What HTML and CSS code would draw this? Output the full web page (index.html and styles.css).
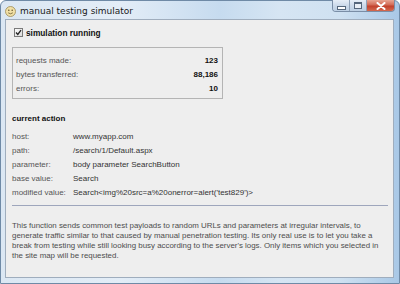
FILE: index.html
```html
<!DOCTYPE html>
<html>
<head>
<meta charset="utf-8">
<link rel="stylesheet" href="styles.css">
</head>
<body>
<div class="window">
  <div class="titlebar">
    <svg class="appicon" width="11" height="11" viewBox="0 0 11 11">
      <circle cx="5.5" cy="5.5" r="5" fill="#f1e0a6" stroke="#9c8a55" stroke-width="0.8"/>
      <circle cx="3.8" cy="4.3" r="0.8" fill="#6a5a30"/>
      <circle cx="7.2" cy="4.3" r="0.8" fill="#6a5a30"/>
      <path d="M3.2 6.8 Q5.5 8.8 7.8 6.8" fill="none" stroke="#6a5a30" stroke-width="0.8"/>
    </svg>
    <span class="title">manual testing simulator</span>
    <div class="caption">
      <div class="cbtn min"><span class="minbar"></span></div>
      <div class="cbtn max"><span class="maxbox"></span></div>
      <div class="cbtn close">
        <svg width="10" height="8" viewBox="0 0 10 8"><path d="M1.5 1 L8.5 7 M8.5 1 L1.5 7" stroke="#fff" stroke-width="2" stroke-linecap="round"/></svg>
      </div>
    </div>
  </div>
  <div class="client">
    <label class="check">
      <span class="box"><svg width="7" height="7" viewBox="0 0 7 7"><path d="M1 3.5 L2.8 5.5 L6 1.2" fill="none" stroke="#222" stroke-width="1.3"/></svg></span>
      <span class="checklabel">simulation running</span>
    </label>
    <div class="stats">
      <div class="srow"><span class="slabel">requests made:</span><span class="sval">123</span></div>
      <div class="srow"><span class="slabel">bytes transferred:</span><span class="sval">88,186</span></div>
      <div class="srow"><span class="slabel">errors:</span><span class="sval">10</span></div>
    </div>
    <div class="heading">current action</div>
    <div class="action">
      <span class="alabel">host:</span><span class="aval">www.myapp.com</span>
      <span class="alabel">path:</span><span class="aval">/search/1/Default.aspx</span>
      <span class="alabel">parameter:</span><span class="aval">body parameter SearchButton</span>
      <span class="alabel">base value:</span><span class="aval">Search</span>
      <span class="alabel">modified value:</span><span class="aval">Search&lt;img%20src=a%20onerror=alert('test829')&gt;</span>
    </div>
    <div class="sep"></div>
    <p class="desc">This function sends common test payloads to random URLs and parameters at irregular intervals, to generate traffic similar to that caused by manual penetration testing. Its only real use is to let you take a break from testing while still looking busy according to the server's logs. Only items which you selected in the site map will be requested.</p>
  </div>
</div>
</body>
</html>
```

FILE: styles.css
```css
html, body {
  margin: 0;
  padding: 0;
  width: 400px;
  height: 284px;
  overflow: hidden;
  background: #ffffff;
}
.window {
  box-sizing: border-box;
  width: 400px;
  height: 284px;
  display: flex;
  flex-direction: column;
  background: linear-gradient(90deg, #dbe7f3 0%, #e3edf7 30%, #c6dbef 55%, #d6e5f3 70%, #cfe1f1 85%, #a9c8e6 100%);
  border: 1px solid #6f8aa6;
  border-radius: 6px 6px 0 0;
  font-family: "Liberation Sans", Arial, sans-serif;
}
.titlebar {
  height: 18px;
  display: flex;
  align-items: center;
  padding-left: 4px;
  flex: none;
}
.appicon {
  flex: none;
  margin-top: 2px;
}
.title {
  margin-left: 4px;
  margin-top: 2px;
  font-family: "DejaVu Sans", sans-serif;
  font-size: 9px;
  color: #1b1b1b;
}
.caption {
  margin-left: auto;
  margin-right: 4px;
  align-self: flex-start;
  display: flex;
  height: 11px;
  margin-top: -1px;
  border: 1px solid #7a8ea6;
  border-top: none;
  border-radius: 0 0 4px 4px;
  overflow: hidden;
}
.cbtn {
  height: 11px;
  display: flex;
  align-items: center;
  justify-content: center;
}
.min, .max {
  width: 16px;
  background: linear-gradient(#e6eef7, #ccdaea 50%, #bccfe3);
  border-right: 1px solid #8fa2b8;
}
.minbar {
  width: 7px;
  height: 2px;
  background: #fff;
  border: 1px solid #55677c;
  margin-top: 4px;
}
.maxbox {
  width: 6px;
  height: 4px;
  border: 1px solid #55677c;
  border-top-width: 2px;
  background: #e8eef5;
}
.close {
  width: 27px;
  background: linear-gradient(#e8a593, #d26a55 45%, #c2412c 55%, #d46a4f);
}
.client {
  flex: 1;
  margin: 0 5px 5px 4px;
  background: #eeeeee;
  border: 1px solid #9fadbd;
  padding: 0 6px;
  color: #333;
  font-size: 8px;
}
.check {
  display: flex;
  align-items: center;
  height: 9px;
  margin-top: 8px;
  margin-left: 2px;
}
.box {
  width: 7px;
  height: 7px;
  border: 1px solid #7a7a7a;
  background: linear-gradient(135deg, #fafafa, #dcdcdc);
  display: flex;
  align-items: center;
  justify-content: center;
}
.checklabel {
  margin-left: 3px;
  font-weight: bold;
  font-size: 8.3px;
  color: #111;
}
.stats {
  margin-top: 10px;
  width: 202px;
  border: 1px solid #b4b4b4;
  padding: 7px 4px 5px 3px;
  display: flex;
  flex-direction: column;
  gap: 4px;
}
.srow {
  display: flex;
  justify-content: space-between;
  height: 10px;
  align-items: center;
}
.slabel {
  color: #555;
}
.sval {
  font-weight: bold;
  color: #111;
}
.heading {
  margin-top: 15px;
  font-weight: bold;
  color: #111;
  height: 10px;
}
.action {
  margin-top: 7px;
  display: grid;
  grid-template-columns: 61px 1fr;
  row-gap: 4px;
  grid-auto-rows: 10px;
  align-items: center;
}
.alabel {
  color: #555;
}
.aval {
  color: #333;
  white-space: nowrap;
}
.sep {
  margin-top: 8px;
  height: 1px;
  background: #9ea6bc;
  margin-right: -1px;
}
.desc {
  margin: 15px 0 0 0;
  font-size: 7.9px;
  line-height: 10px;
  color: #4d4d4d;
}
```
